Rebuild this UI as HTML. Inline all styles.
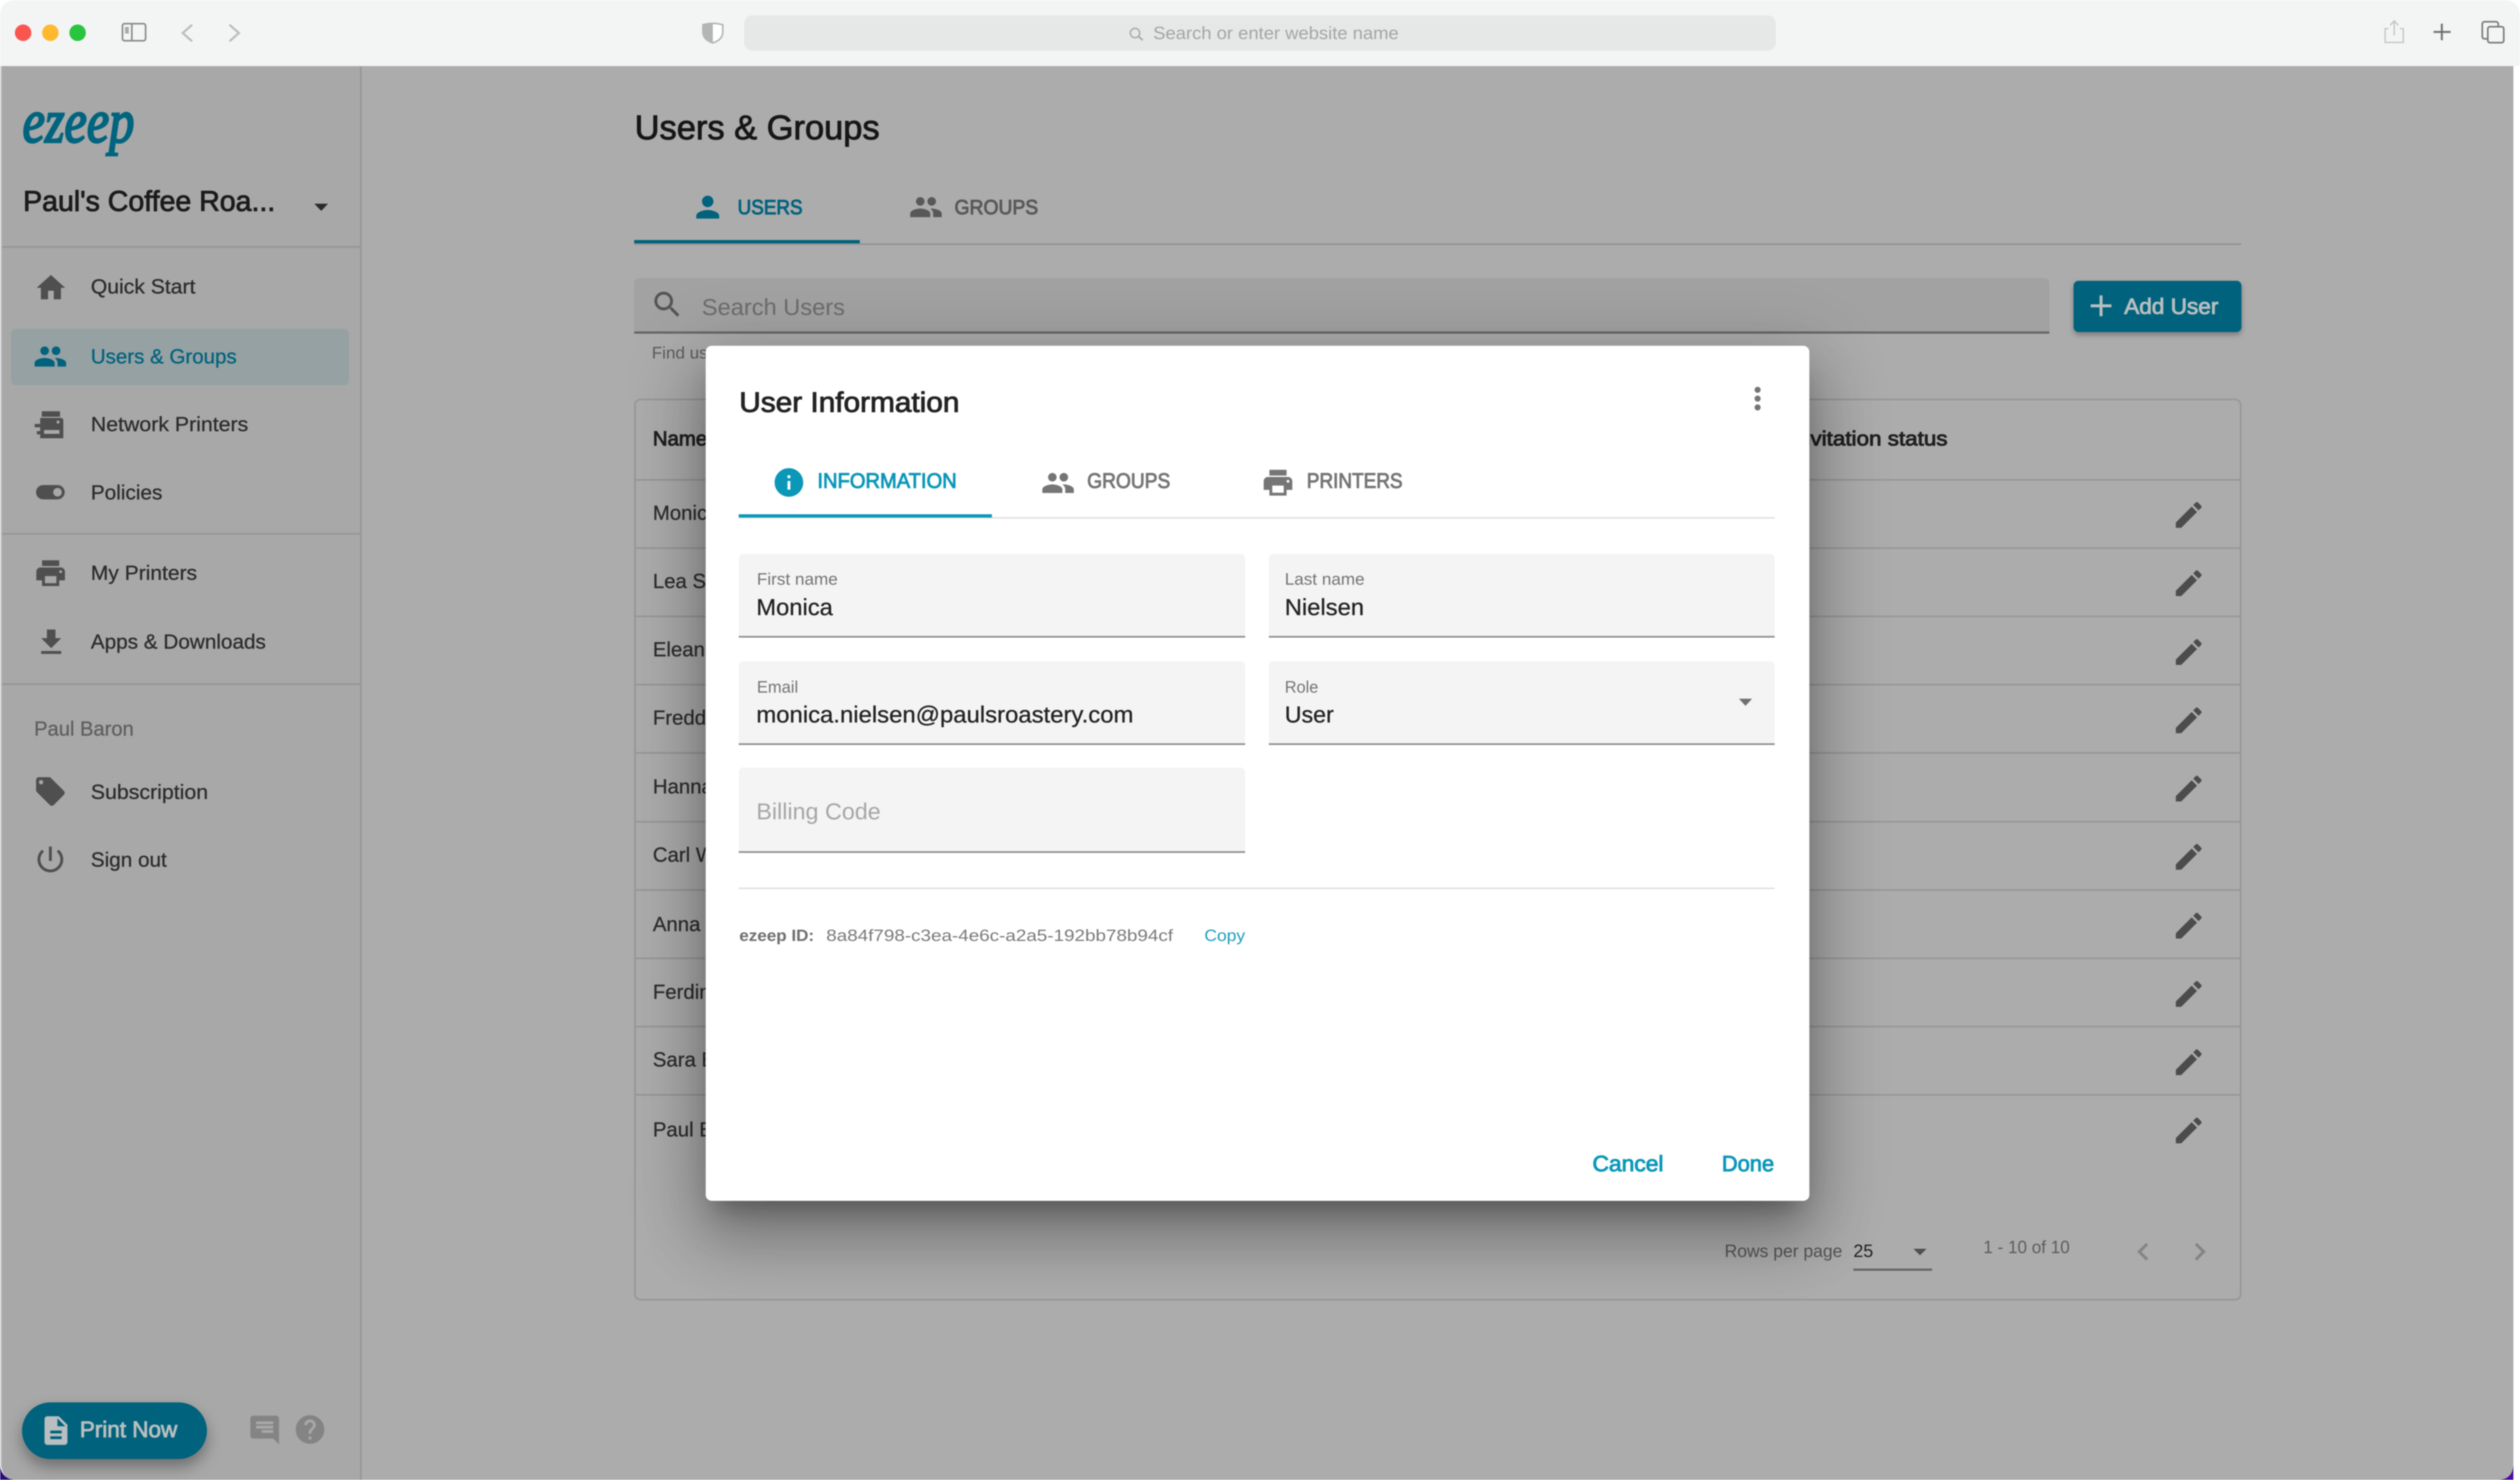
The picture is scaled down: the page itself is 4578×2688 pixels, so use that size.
<!DOCTYPE html>
<html lang="en">
<head>
<meta charset="utf-8">
<title>Users &amp; Groups</title>
<style>
html,body{margin:0;padding:0;background:#fff;width:4578px;height:2688px;overflow:hidden}
#stage{position:relative;width:4578px;height:2688px;overflow:hidden;filter:blur(1.1px)}
svg{position:absolute;left:0;top:0;display:block}
svg text{font-family:"Liberation Sans",sans-serif}
#dlg{position:absolute;left:1282px;top:628px;width:2005px;height:1553px;background:#fff;border-radius:11px;
box-shadow:0 32px 44px -20px rgba(0,0,0,.3),0 70px 110px 9px rgba(0,0,0,.2),0 26px 134px 23px rgba(0,0,0,.17)}
.m{stroke-width:1.5px}
.r{stroke-width:.5px}
</style>
</head>
<body>
<div id="stage">
<svg width="4578" height="2688" viewBox="0 0 4578 2688" xmlns="http://www.w3.org/2000/svg">
<defs>
<path id="i-home" d="M10 20v-6h4v6h5v-8h3L12 3 2 12h3v8z"/>
<path id="i-people" d="M16 11c1.66 0 2.99-1.34 2.99-3S17.66 5 16 5c-1.66 0-3 1.34-3 3s1.34 3 3 3zm-8 0c1.66 0 2.99-1.34 2.99-3S9.66 5 8 5C6.34 5 5 6.34 5 8s1.34 3 3 3zm0 2c-2.33 0-7 1.17-7 3.5V19h14v-2.5c0-2.33-4.67-3.5-7-3.5zm8 0c-.29 0-.62.02-.97.05 1.16.84 1.97 1.97 1.97 3.45V19h6v-2.5c0-2.33-4.67-3.5-7-3.5z"/>
<path id="i-person" d="M12 12c2.21 0 4-1.79 4-4s-1.79-4-4-4-4 1.79-4 4 1.79 4 4 4zm0 2c-2.67 0-8 1.34-8 4v2h16v-2c0-2.66-5.33-4-8-4z"/>
<path id="i-print" d="M19 8H5c-1.66 0-3 1.34-3 3v6h4v4h12v-4h4v-6c0-1.66-1.34-3-3-3zm-3 11H8v-5h8v5zm3-7c-.55 0-1-.45-1-1s.45-1 1-1 1 .45 1 1-.45 1-1 1zm-1-9H6v4h12V3z"/>
<path id="i-dl" d="M19 9h-4V3H9v6H5l7 7 7-7zM5 18v2h14v-2H5z"/>
<path id="i-toggle" d="M17 7H7c-2.76 0-5 2.24-5 5s2.24 5 5 5h10c2.76 0 5-2.24 5-5s-2.24-5-5-5zm0 8c-1.66 0-3-1.34-3-3s1.34-3 3-3 3 1.34 3 3-1.34 3-3 3z"/>
<path id="i-tag" d="M21.41 11.58l-9-9C12.05 2.22 11.55 2 11 2H4c-1.1 0-2 .9-2 2v7c0 .55.22 1.05.59 1.42l9 9c.36.36.86.58 1.41.58.55 0 1.05-.22 1.41-.59l7-7c.37-.36.59-.86.59-1.41 0-.55-.23-1.06-.59-1.42zM5.5 7C4.67 7 4 6.33 4 5.5S4.67 4 5.5 4 7 4.67 7 5.5 6.33 7 5.5 7z"/>
<path id="i-power" d="M13 3h-2v10h2V3zm4.83 2.17l-1.42 1.42C17.99 7.86 19 9.81 19 12c0 3.87-3.13 7-7 7s-7-3.13-7-7c0-2.19 1.01-4.14 2.58-5.42L6.17 5.17C4.23 6.82 3 9.26 3 12c0 4.97 4.03 9 9 9s9-4.03 9-9c0-2.74-1.23-5.18-3.17-6.83z"/>
<path id="i-search" d="M15.5 14h-.79l-.28-.27C15.41 12.59 16 11.11 16 9.5 16 5.91 13.09 3 9.5 3S3 5.91 3 9.5 5.91 16 9.5 16c1.61 0 3.09-.59 4.23-1.57l.27.28v.79l5 4.99L20.49 19l-4.99-5zm-6 0C7.01 14 5 11.99 5 9.5S7.01 5 9.5 5 14 7.01 14 9.5 11.99 14 9.5 14z"/>
<path id="i-edit" d="M3 17.25V21h3.75L17.81 9.94l-3.75-3.75L3 17.25zM20.71 7.04c.39-.39.39-1.02 0-1.41l-2.34-2.34a.9959.9959 0 0 0-1.41 0l-1.83 1.83 3.75 3.75 1.83-1.83z"/>
<path id="i-add" d="M19 13h-6v6h-2v-6H5v-2h6V5h2v6h6v2z"/>
<path id="i-file" d="M14 2H6c-1.1 0-1.99.9-1.99 2L4 20c0 1.1.89 2 1.99 2H18c1.1 0 2-.9 2-2V8l-6-6zm2 16H8v-2h8v2zm0-4H8v-2h8v2zm-3-5V3.5L18.5 9H13z"/>
<path id="i-chat" d="M20 2H4c-1.1 0-1.99.9-1.99 2L2 22l4-4h14c1.1 0 2-.9 2-2V4c0-1.1-.9-2-2-2zM6 9h12v2H6V9zm8 5H6v-2h8v2zm4-6H6V6h12v2z"/>
<path id="i-help" d="M12 2C6.48 2 2 6.48 2 12s4.48 10 10 10 10-4.48 10-10S17.52 2 12 2zm1 17h-2v-2h2v2zm2.07-7.75l-.9.92C13.45 12.9 13 13.5 13 15h-2v-.5c0-1.1.45-2.1 1.17-2.83l1.24-1.26c.37-.36.59-.86.59-1.41 0-1.1-.9-2-2-2s-2 .9-2 2H8c0-2.21 1.79-4 4-4s4 1.79 4 4c0 .88-.36 1.68-.93 2.25z"/>
<filter id="btnsh" x="-20%" y="-30%" width="140%" height="180%"><feDropShadow dx="0" dy="14" stdDeviation="14" flood-color="#000" flood-opacity=".35"/></filter>
<filter id="btnsh2" x="-20%" y="-30%" width="140%" height="180%"><feDropShadow dx="0" dy="5" stdDeviation="5" flood-color="#000" flood-opacity=".3"/></filter>
</defs>

<!-- window -->
<rect width="4578" height="2688" fill="#fff"/>
<path d="M0 2660V2688H28Q2 2686 0 2660Z" fill="#2c0a78"/>
<path d="M4566 2660V2688H4538Q4564 2686 4566 2660Z" fill="#4b0c9a"/>
<path d="M3 120H4566V2658Q4566 2688 4536 2688H30Q3 2688 3 2660Z" fill="#acacac"/>
<path d="M3 120H655V2688H30Q3 2688 3 2660Z" fill="#a8a8a8"/>
<rect x="0" y="120" width="3" height="2545" fill="#cfcfcf"/>
<rect x="654" y="120" width="3" height="2568" fill="#979797"/>

<!-- sidebar -->
<text x="41" y="258" font-size="112" fill="#00647f" stroke="#00647f" stroke-width="4" textLength="203" lengthAdjust="spacingAndGlyphs" style="font-family:'Liberation Serif',serif;font-style:italic">ezeep</text>
<text x="42" y="383" font-size="52" fill="#1b1b1b" stroke="#1b1b1b" class="m" textLength="458" lengthAdjust="spacingAndGlyphs">Paul's Coffee Roa...</text>
<polygon points="571,370 596,370 583.5,383" fill="#2a2a2a"/>
<rect x="3" y="447" width="651" height="3" fill="#979797"/>
<rect x="3" y="968" width="651" height="3" fill="#979797"/>
<rect x="3" y="1241" width="651" height="3" fill="#979797"/>
<rect x="20" y="597" width="614" height="103" rx="10" fill="#95a1a3"/>

<g fill="#4f4f4f">
<use href="#i-home" transform="translate(61.3 491.6) scale(2.6)"/>
<use href="#i-toggle" transform="translate(60.3 862.8) scale(2.6)"/>
<use href="#i-print" transform="translate(60.8 1009.8) scale(2.6)"/>
<use href="#i-dl" transform="translate(61.8 1135.6) scale(2.6)"/>
<use href="#i-tag" transform="translate(60.3 1406.3) scale(2.6)"/>
<use href="#i-power" transform="translate(60.3 1529.8) scale(2.6)"/>
<path fill-rule="evenodd" d="M76 747H109V757H76ZM73 759H110Q115 759 115 764V796H73V789H67V783H73V776H63V770H73ZM80 781V788H108V781Z M103 764H108V769H103Z"/>
</g>
<use href="#i-people" fill="#00627c" transform="translate(60.3 616.3) scale(2.6)"/>

<g font-size="37" fill="#2c2c2c" stroke="#2c2c2c" class="r">
<text x="165" y="533" textLength="190" lengthAdjust="spacingAndGlyphs">Quick Start</text>
<text x="165" y="660" fill="#00627c" stroke="#00627c" textLength="265" lengthAdjust="spacingAndGlyphs">Users &amp; Groups</text>
<text x="165" y="783" textLength="286" lengthAdjust="spacingAndGlyphs">Network Printers</text>
<text x="165" y="907" textLength="130" lengthAdjust="spacingAndGlyphs">Policies</text>
<text x="165" y="1053" textLength="193" lengthAdjust="spacingAndGlyphs">My Printers</text>
<text x="165" y="1178" textLength="318" lengthAdjust="spacingAndGlyphs">Apps &amp; Downloads</text>
<text x="62" y="1336" fill="#5f5f5f" stroke="#5f5f5f" textLength="181" lengthAdjust="spacingAndGlyphs">Paul Baron</text>
<text x="165" y="1451" textLength="213" lengthAdjust="spacingAndGlyphs">Subscription</text>
<text x="165" y="1574" textLength="138" lengthAdjust="spacingAndGlyphs">Sign out</text>
</g>

<rect x="40" y="2547" width="336" height="103" rx="51.5" fill="#00627c" filter="url(#btnsh)"/>
<use href="#i-file" fill="#b9bfc1" transform="translate(70.5 2567) scale(2.6)"/>
<text x="145" y="2610" font-size="41" fill="#b9bfc1" stroke="#b9bfc1" class="m" textLength="177" lengthAdjust="spacingAndGlyphs">Print Now</text>
<use href="#i-chat" fill="#848484" transform="translate(512 2566) scale(-2.6 2.6)"/>
<use href="#i-help" fill="#848484" transform="translate(532 2565) scale(2.6)"/>

<!-- main heading -->
<text x="1153" y="253" font-size="62" fill="#161616" stroke="#161616" class="m" textLength="445" lengthAdjust="spacingAndGlyphs">Users &amp; Groups</text>
<use href="#i-person" fill="#00627c" transform="translate(1254.5 345) scale(2.6)"/>
<text x="1340" y="389" font-size="37" fill="#00627c" stroke="#00627c" class="m" textLength="118" lengthAdjust="spacingAndGlyphs">USERS</text>
<use href="#i-people" fill="#585858" transform="translate(1651 345) scale(2.6)"/>
<text x="1734" y="389" font-size="37" fill="#585858" stroke="#585858" class="m" textLength="152" lengthAdjust="spacingAndGlyphs">GROUPS</text>
<rect x="1152" y="442" width="2920" height="3" fill="#959595"/>
<rect x="1152" y="436" width="410" height="6" fill="#00627c"/>

<!-- search + add -->
<path d="M1152 515Q1152 505 1162 505H3713Q3723 505 3723 515V604H1152Z" fill="#a2a2a2"/>
<rect x="1152" y="602" width="2571" height="4" fill="#666"/>
<use href="#i-search" fill="#545454" transform="translate(1181 522) scale(2.6)"/>
<text x="1275" y="572" font-size="42" fill="#6c6c6c" textLength="260" lengthAdjust="spacingAndGlyphs">Search Users</text>
<text x="1184" y="651" font-size="31" fill="#5c5c5c">Find users</text>
<rect x="3767" y="510" width="305" height="93" rx="9" fill="#00627c" filter="url(#btnsh2)"/>
<use href="#i-add" fill="#b9bfc1" transform="translate(3784.5 523) scale(2.7)"/>
<text x="3859" y="570" font-size="40" fill="#b9bfc1" stroke="#b9bfc1" class="m" textLength="171" lengthAdjust="spacingAndGlyphs">Add User</text>

<!-- table -->
<rect x="1153.5" y="725.5" width="2917" height="1635" rx="10" fill="none" stroke="#979797" stroke-width="3"/>
<g fill="#979797">
<rect x="1153" y="870" width="2918" height="3"/>
<rect x="1153" y="994" width="2918" height="3"/>
<rect x="1153" y="1118" width="2918" height="3"/>
<rect x="1153" y="1242" width="2918" height="3"/>
<rect x="1153" y="1366" width="2918" height="3"/>
<rect x="1153" y="1491" width="2918" height="3"/>
<rect x="1153" y="1615" width="2918" height="3"/>
<rect x="1153" y="1739" width="2918" height="3"/>
<rect x="1153" y="1863" width="2918" height="3"/>
<rect x="1153" y="1987" width="2918" height="3"/>
</g>
<text x="1186" y="809" font-size="37" fill="#1f1f1f" stroke="#1f1f1f" class="m">Name</text>
<text x="3255" y="809" font-size="37" fill="#1f1f1f" stroke="#1f1f1f" class="m" textLength="283" lengthAdjust="spacingAndGlyphs">Invitation status</text>
<g font-size="37" fill="#2e2e2e" stroke="#2e2e2e" class="r">
<text x="1186" y="944">Monica</text>
<text x="1186" y="1068">Lea S</text>
<text x="1186" y="1192">Eleanor</text>
<text x="1186" y="1316">Freddie</text>
<text x="1186" y="1441">Hanna</text>
<text x="1186" y="1565">Carl W</text>
<text x="1186" y="1691">Anna</text>
<text x="1186" y="1814">Ferdinand</text>
<text x="1186" y="1937">Sara B</text>
<text x="1186" y="2064">Paul B</text>
</g>
<g fill="#4c4c4c">
<use href="#i-edit" transform="translate(3945 904) scale(2.6)"/>
<use href="#i-edit" transform="translate(3945 1028) scale(2.6)"/>
<use href="#i-edit" transform="translate(3945 1153) scale(2.6)"/>
<use href="#i-edit" transform="translate(3945 1277) scale(2.6)"/>
<use href="#i-edit" transform="translate(3945 1401) scale(2.6)"/>
<use href="#i-edit" transform="translate(3945 1525) scale(2.6)"/>
<use href="#i-edit" transform="translate(3945 1650) scale(2.6)"/>
<use href="#i-edit" transform="translate(3945 1774) scale(2.6)"/>
<use href="#i-edit" transform="translate(3945 1898) scale(2.6)"/>
<use href="#i-edit" transform="translate(3945 2022) scale(2.6)"/>
</g>

<!-- pagination -->
<text x="3133" y="2283" font-size="32" fill="#555" textLength="214" lengthAdjust="spacingAndGlyphs">Rows per page</text>
<text x="3367" y="2283" font-size="32" fill="#222" textLength="36" lengthAdjust="spacingAndGlyphs">25</text>
<polygon points="3476,2268 3500,2268 3488,2280" fill="#4f4f4f"/>
<rect x="3367" y="2304" width="143" height="4" fill="#666"/>
<text x="3603" y="2276" font-size="32" fill="#5d5d5d" textLength="157" lengthAdjust="spacingAndGlyphs">1 - 10 of 10</text>
<path d="M15.41 7.41L14 6l-6 6 6 6 1.41-1.41L10.83 12z" fill="#858585" transform="translate(3861 2241) scale(2.7)"/>
<path d="M10 6L8.59 7.41 13.17 12l-4.58 4.59L10 18l6-6z" fill="#858585" transform="translate(3964 2241) scale(2.7)"/>

<!-- safari toolbar -->
<path d="M0 120V30Q0 0 30 0H4548Q4578 0 4578 30V120Z" fill="#f3f5f4"/>
<circle cx="42" cy="59.5" r="15" fill="#fb5550"/>
<circle cx="91.5" cy="59.5" r="15" fill="#feb92f"/>
<circle cx="141" cy="59.5" r="15" fill="#29c53e"/>
<rect x="222.5" y="43" width="42" height="31" rx="4" fill="none" stroke="#8a8c8b" stroke-width="3"/>
<rect x="238" y="43" width="3" height="31" fill="#8a8c8b"/>
<rect x="227" y="49" width="7" height="12" fill="#a9abaa"/>
<path d="M349 45L332 60L349 75" fill="none" stroke="#bcbebd" stroke-width="4"/>
<path d="M417 45L434 60L417 75" fill="none" stroke="#bcbebd" stroke-width="4"/>
<path d="M1277 45Q1295 40 1313 45V58Q1313 72 1295 78Q1277 72 1277 58Z" fill="#fff" stroke="#b4b6b5" stroke-width="3"/>
<path d="M1277 45Q1286 42 1295 42V78Q1277 72 1277 58Z" fill="#b4b6b5"/>
<rect x="1352" y="28" width="1874" height="64" rx="14" fill="#e6e8e7"/>
<circle cx="2062" cy="60" r="8.5" fill="none" stroke="#a4a6a5" stroke-width="2.5"/>
<path d="M2068 66L2076 73" stroke="#a4a6a5" stroke-width="3"/>
<text x="2095" y="71" font-size="32" fill="#a4a6a5" textLength="446" lengthAdjust="spacingAndGlyphs">Search or enter website name</text>
<path d="M4339 52H4333V77H4366V52H4360M4349.5 64V39M4342 46L4349.5 38L4357 46" fill="none" stroke="#c4c6c5" stroke-width="2.5"/>
<path d="M4436 43V73M4421 58H4452" stroke="#6e6f6e" stroke-width="3.5"/>
<rect x="4509.5" y="39.5" width="29" height="31" rx="4" fill="none" stroke="#7a7b7a" stroke-width="3"/>
<rect x="4519.5" y="48.5" width="29" height="29" rx="4" fill="#f3f5f4" stroke="#7a7b7a" stroke-width="3"/>
</svg>

<div id="dlg"></div>

<svg width="4578" height="2688" viewBox="0 0 4578 2688" xmlns="http://www.w3.org/2000/svg">
<text x="1343" y="748" font-size="51" fill="#222" stroke="#222" class="m" textLength="400" lengthAdjust="spacingAndGlyphs">User Information</text>
<g fill="#757575"><circle cx="3193" cy="708" r="5.5"/><circle cx="3193" cy="724" r="5.5"/><circle cx="3193" cy="740" r="5.5"/></g>

<path d="M12 2C6.48 2 2 6.48 2 12s4.48 10 10 10 10-4.48 10-10S17.52 2 12 2zm1 15h-2v-6h2v6zm0-8h-2V7h2v2z" fill="#0a97b8" transform="translate(1402 845) scale(2.6)"/>
<text x="1485" y="886" font-size="38" fill="#0a97b8" stroke="#0a97b8" class="m" textLength="253" lengthAdjust="spacingAndGlyphs">INFORMATION</text>
<use href="#i-people" fill="#757575" transform="translate(1891 846) scale(2.6)"/>
<text x="1975" y="886" font-size="38" fill="#757575" stroke="#757575" class="m" textLength="151" lengthAdjust="spacingAndGlyphs">GROUPS</text>
<use href="#i-print" fill="#757575" transform="translate(2290.5 845.5) scale(2.6)"/>
<text x="2374" y="886" font-size="38" fill="#757575" stroke="#757575" class="m" textLength="174" lengthAdjust="spacingAndGlyphs">PRINTERS</text>
<rect x="1342" y="939" width="1882" height="3" fill="#e2e2e2"/>
<rect x="1342" y="934" width="460" height="6" fill="#0a97b8"/>

<g fill="#f4f4f4">
<path d="M1342 1016Q1342 1006 1352 1006H2252Q2262 1006 2262 1016V1155H1342Z"/>
<path d="M2305 1016Q2305 1006 2315 1006H3214Q3224 1006 3224 1016V1155H2305Z"/>
<path d="M1342 1211Q1342 1201 1352 1201H2252Q2262 1201 2262 1211V1350H1342Z"/>
<path d="M2305 1211Q2305 1201 2315 1201H3214Q3224 1201 3224 1211V1350H2305Z"/>
<path d="M1342 1404Q1342 1394 1352 1394H2252Q2262 1394 2262 1404V1546H1342Z"/>
</g>
<g fill="#8c8c8c">
<rect x="1342" y="1155" width="920" height="3"/>
<rect x="2305" y="1155" width="919" height="3"/>
<rect x="1342" y="1350" width="920" height="3"/>
<rect x="2305" y="1350" width="919" height="3"/>
<rect x="1342" y="1546" width="920" height="3"/>
</g>
<g font-size="31" fill="#757575">
<text x="1375" y="1062" textLength="147" lengthAdjust="spacingAndGlyphs">First name</text>
<text x="2334" y="1062" textLength="145" lengthAdjust="spacingAndGlyphs">Last name</text>
<text x="1375" y="1258" textLength="75" lengthAdjust="spacingAndGlyphs">Email</text>
<text x="2334" y="1258" textLength="61" lengthAdjust="spacingAndGlyphs">Role</text>
</g>
<g font-size="42" fill="#222" stroke="#222" class="r">
<text x="1374" y="1117" textLength="139" lengthAdjust="spacingAndGlyphs">Monica</text>
<text x="2334" y="1117" textLength="144" lengthAdjust="spacingAndGlyphs">Nielsen</text>
<text x="1374" y="1312" textLength="685" lengthAdjust="spacingAndGlyphs">monica.nielsen@paulsroastery.com</text>
<text x="2334" y="1312" textLength="89" lengthAdjust="spacingAndGlyphs">User</text>
</g>
<polygon points="3159,1269 3183,1269 3171,1282" fill="#707070"/>
<text x="1374" y="1488" font-size="42" fill="#a6a6a6" textLength="226" lengthAdjust="spacingAndGlyphs">Billing Code</text>
<rect x="1342" y="1612" width="1882" height="3" fill="#e2e2e2"/>
<text x="1343" y="1709" font-size="30" font-weight="700" fill="#6f6f6f" textLength="136" lengthAdjust="spacingAndGlyphs">ezeep ID:</text>
<text x="1501" y="1709" font-size="30" fill="#7a7a7a" textLength="630" lengthAdjust="spacingAndGlyphs">8a84f798-c3ea-4e6c-a2a5-192bb78b94cf</text>
<text x="2188" y="1709" font-size="30" fill="#1a9dbd" textLength="74" lengthAdjust="spacingAndGlyphs">Copy</text>
<text x="2893" y="2127" font-size="40" fill="#0a97b8" stroke="#0a97b8" class="m" textLength="129" lengthAdjust="spacingAndGlyphs">Cancel</text>
<text x="3128" y="2127" font-size="40" fill="#0a97b8" stroke="#0a97b8" class="m" textLength="95" lengthAdjust="spacingAndGlyphs">Done</text>
</svg>
</div>
</body>
</html>
